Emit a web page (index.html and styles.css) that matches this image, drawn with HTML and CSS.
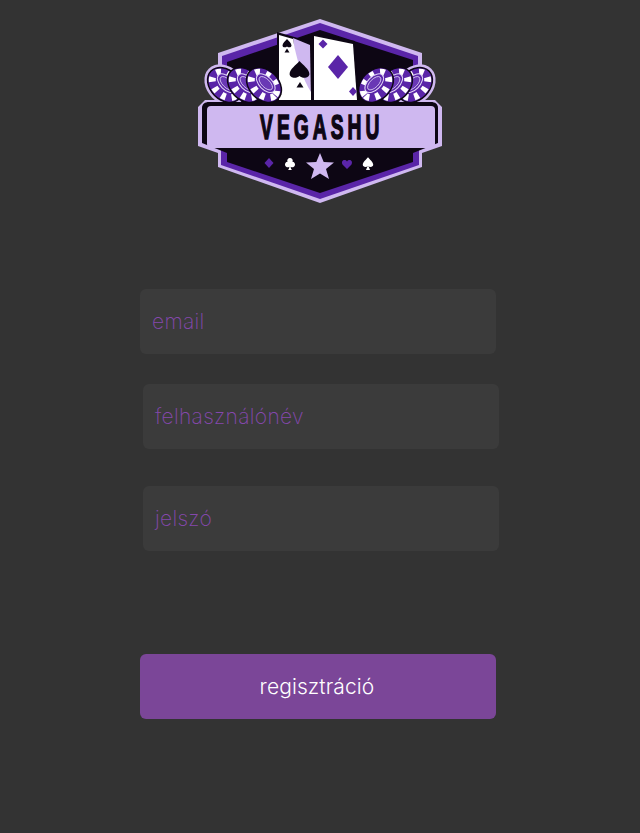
FILE: index.html
```html
<!DOCTYPE html>
<html lang="hu">
<head>
<meta charset="utf-8">
<title>Vegashu</title>
<link rel="stylesheet" href="styles.css">
</head>
<body>
<main class="page">
  <svg class="logo" viewBox="195 15 250 190" width="250" height="190" xmlns="http://www.w3.org/2000/svg">
    <defs>
      <path id="blade" d="M0-10C3-6 9-2 9 3C9 7 3 8 0 5C-3 8-9 7-9 3C-9-2-3-6 0-10Z"/>
      <path id="club" d="M0-9A4 4 0 0 1 3.600-3.200A4 4 0 1 1 1 4C1 6 2 8 3 9L-3 9C-2 8-1 6-1 4A4 4 0 1 1-3.600-3.200A4 4 0 0 1 0-9Z"/>
      <g id="chip">
        <ellipse rx="20.500" ry="15.500" class="blk"/>
        <ellipse rx="19" ry="14" class="pur"/>
        <ellipse class="rim" rx="15" ry="10" stroke-dasharray="4.500 6"/>
        <ellipse class="ring" cy="-2.500" rx="11.500" ry="6.500"/>
        <ellipse class="face" cy="-2.500" rx="8.500" ry="4.200"/>
      </g>
      <g id="stack">
        <ellipse class="lav" cx="225" cy="85" rx="23" ry="18" transform="rotate(45 225 85)"/>
        <use href="#chip" transform="translate(225 85) rotate(45)"/>
        <use href="#chip" transform="translate(245 85) rotate(45)"/>
        <use href="#chip" transform="translate(264 85) rotate(45)"/>
      </g>
    </defs>
    <path class="lav" d="M320 19L422 53L422 100L435 100L442 107L442 146L422 153L422 167L320 203L218 167L218 153L198 146L198 107L205 100L218 100L218 53Z"/>
    <path class="pur" d="M320 23L418 56L418 105L222 105L222 56Z"/>
    <path class="pur" d="M221 150L419 150L419 165L320 199L221 165Z"/>
    <path class="blk" d="M320 30L413 60L413 105L227 105L227 62Z"/>
    <path class="blk" d="M227 150L413 150L413 162L320 193L227 162Z"/>

    <path class="blk" d="M277 32L312 42L312 33L355 41L359 103L277 103Z"/>
    <path class="lav" d="M293 38L310 45L311 100L300 100Z"/>
    <path class="wht" d="M279 35L293 39C296 58 303 80 311 92L311 100L279 100Z"/>
    <path class="wht" d="M314 36L353 44L357 100L314 100Z"/>
    <use href="#blade" class="blk" transform="translate(287 44) scale(.5)"/>
    <path class="blk" d="M287 48.500L289.500 52.500L284.500 52.500Z"/>
    <use href="#blade" class="blk" transform="translate(299.500 71) scale(1.1 1)"/>
    <path class="blk" d="M300 82L303.500 87.500L296.500 87.500Z"/>
    <path class="pur" d="M323 39.500L327.500 44L323 48.500L318.500 44Z"/>
    <path class="pur" d="M338 55L348 67L338 79L328 67Z"/>
    <path class="pur" d="M353 87L357 91.500L353 96L349 91.500Z"/>

    <use href="#stack"/>
    <use href="#stack" transform="translate(640 0) scale(-1 1)"/>

    <path class="blk" d="M209 102L431 102C435 102 438 104 438 108L438 143L413 153L227 153L202 143L202 108C202 104 205 102 209 102Z"/>
    <rect class="lav" x="207" y="106" width="228" height="42" rx="4"/>
    <text class="brand" x="585" y="139" text-anchor="middle" transform="scale(.55 1)">VEGASHU</text>

    <path class="pur" d="M269 158L273.500 163L269 168L264.500 163Z"/>
    <use href="#club" class="wht" transform="translate(290 164) scale(.68)"/>
    <path class="lav" d="M320 153L323.700 162L334 162.500L326 169L329 179L320 173.500L311 179L314 169L306 162.500L316.300 162Z"/>
    <path class="pur" d="M347 169L342.500 164.500C340.500 160.500 345 158.500 347 161.500C349 158.500 353.500 160.500 351.500 164.500Z"/>
    <use href="#blade" class="wht" transform="translate(368 163) scale(.58)"/>
    <path class="wht" d="M368 165L370 170L366 170Z"/>
  </svg>

  <form class="form">
    <div class="field"><span class="ph">email</span></div>
    <div class="field field-shift field-user"><span class="ph">felhasználónév</span></div>
    <div class="field field-shift field-pass"><span class="ph">jelszó</span></div>
    <button class="submit" type="button">regisztráció</button>
  </form>
</main>
</body>
</html>
```

FILE: styles.css
```css
html, body {
  margin: 0;
  padding: 0;
  background: #333333;
}
.page {
  width: 640px;
  height: 833px;
  overflow: hidden;
  font-family: "Inter", "Liberation Sans", sans-serif;
}
.logo {
  display: block;
  margin: 15px 0 0 195px;
}
.lav { fill: #cfb8f0; }
.pur { fill: #5a25a8; }
.blk { fill: #0d0614; }
.wht { fill: #ffffff; }
.rim {
  fill: none;
  stroke: #ffffff;
  stroke-width: 7px;
}
.ring {
  fill: #5a25a8;
  stroke: #e4d8f8;
  stroke-width: 1px;
}
.face {
  fill: #6a38b5;
  stroke: #e4d8f8;
  stroke-width: .8px;
}
.brand {
  font-family: "Liberation Sans", sans-serif;
  font-weight: 700;
  font-size: 35px;
  letter-spacing: 7.300px;
  fill: #0d0614;
  stroke: #0d0614;
  stroke-width: 1.600px;
}
.form {
  display: flex;
  flex-direction: column;
  align-items: flex-start;
  margin: 84px 0 0 140px;
}
.field {
  width: 356px;
  height: 65px;
  box-sizing: border-box;
  padding: 0 12px;
  display: flex;
  align-items: center;
  background: #3b3b3b;
  border-radius: 6px;
}
.field-shift { margin-left: 3px; }
.field-user { margin-top: 30px; }
.field-pass { margin-top: 37px; }
.ph {
  font-size: 21px;
  font-weight: 200;
  letter-spacing: .3px;
  color: #8548ad;
}
.submit {
  width: 356px;
  height: 65px;
  margin-top: 103px;
  padding: 0 2px 0 0;
  border: 0;
  border-radius: 6px;
  background: #7b4698;
  color: #ffffff;
  font-family: inherit;
  font-size: 21px;
  font-weight: 300;
  letter-spacing: .1px;
}
```
